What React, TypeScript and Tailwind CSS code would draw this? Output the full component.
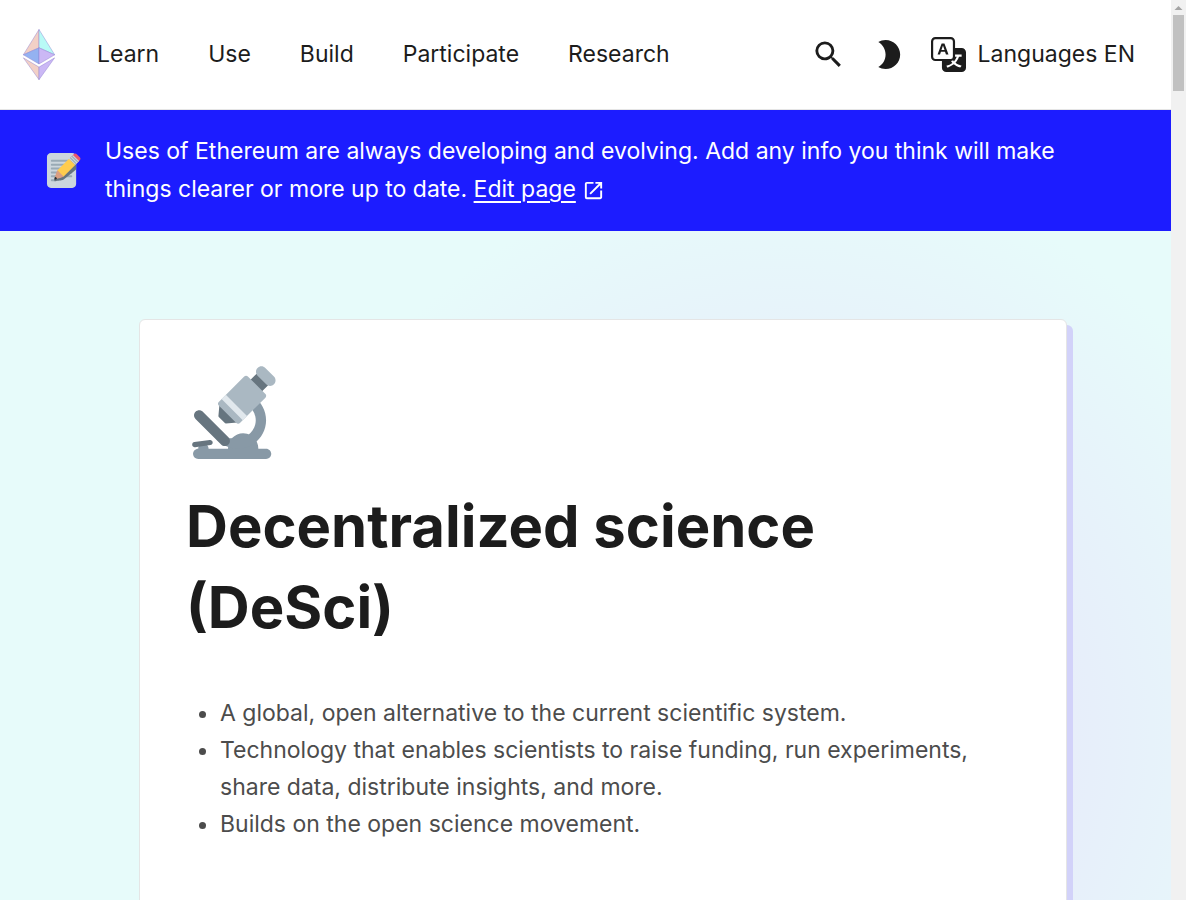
import { MdBrightness2, MdOpenInNew, MdSearch } from "react-icons/md";
import { BsTranslate } from "react-icons/bs";

function EthLogo() {
  return (
    <svg viewBox="-0.5 0.5 33 52" className="h-[52px] w-[33px]" aria-hidden="true">
      <g stroke="#8c7fd0" strokeOpacity="0.55" strokeWidth="0.8" strokeLinejoin="round">
        <path fill="#f2d0c6" d="M16.5 1 .8 26.3 16.5 19.3z" />
        <path fill="#b8faf6" d="M16.5 1v18.3l15.7 7z" />
        <path fill="#94b2f1" d="M.8 26.3 16.5 19.3v16.2z" />
        <path fill="#cbb8f5" d="M32.2 26.3 16.5 19.3v16.2z" />
        <path fill="#f2d0c6" d="M.8 29.3 16.5 38.6v12.6z" />
        <path fill="#cbb8f5" d="M32.2 29.3 16.5 38.6v12.6z" />
      </g>
    </svg>
  );
}

function Memo() {
  return (
    <svg viewBox="0 0 36 36" className="size-[35px] shrink-0" aria-hidden="true">
      <path fill="#CCD6DD" d="M31 32c0 2.209-1.791 4-4 4H5c-2.209 0-4-1.791-4-4V4c0-2.209 1.791-4 4-4h22c2.209 0 4 1.791 4 4v28z" />
      <path fill="#99AAB5" d="M27 24c0 .553-.447 1-1 1H6c-.552 0-1-.447-1-1 0-.553.448-1 1-1h20c.553 0 1 .447 1 1zm-16 4c0 .553-.448 1-1 1H6c-.552 0-1-.447-1-1 0-.553.448-1 1-1h4c.552 0 1 .447 1 1zM27 8c0 .552-.447 1-1 1H6c-.552 0-1-.448-1-1s.448-1 1-1h20c.553 0 1 .448 1 1zm0 4c0 .553-.447 1-1 1H6c-.552 0-1-.447-1-1 0-.553.448-1 1-1h20c.553 0 1 .447 1 1zm0 4c0 .553-.447 1-1 1H6c-.552 0-1-.447-1-1 0-.553.448-1 1-1h20c.553 0 1 .447 1 1zm0 4c0 .553-.447 1-1 1H6c-.552 0-1-.447-1-1 0-.553.448-1 1-1h20c.553 0 1 .447 1 1z" />
      <path fill="#66757F" d="M31 6.272c-.827-.535-1.837-.579-2.521-.023l-.792.646-1.484 1.211-.1.08-2.376 1.938-11.878 9.686c-.437.357-.793 1.219-1.173 2.074-.378.85-.969 2.852-1.443 4.391-.148.25-1.065 1.846-.551 2.453.52.615 2.326.01 2.568-.076 1.626-.174 3.731-.373 4.648-.58.924-.211 1.854-.395 2.291-.752.008-.006.01-.018.017-.023l11.858-9.666.792-.646.144-.118V6.272z" />
      <path fill="#D99E82" d="M18.145 22.526s-1.274-1.881-2.117-2.553c-.672-.843-2.549-2.116-2.549-2.116-.448-.446-1.191-.48-1.629-.043-.437.438-.793 1.366-1.173 2.291-.472 1.146-1.276 4.154-1.768 5.752-.083.272.517-.45.503-.21-.01.187.027.394.074.581l-.146.159.208.067c.025.082.05.154.068.21l.159-.146c.187.047.394.084.58.074.24-.014-.483.587-.21.503 1.598-.493 4.607-1.296 5.752-1.768.924-.381 1.854-.736 2.291-1.174.439-.435.406-1.178-.043-1.627z" />
      <path fill="#EA596E" d="M25.312 4.351c-.876.875-.876 2.293 0 3.168l3.167 3.168c.876.874 2.294.874 3.168 0l3.169-3.168c.874-.875.874-2.293 0-3.168l-3.169-3.168c-.874-.875-2.292-.875-3.168 0l-3.167 3.168z" />
      <path fill="#FFCC4D" d="M11.849 17.815l3.17 3.17 3.165 3.166 11.881-11.879-6.337-6.336-11.879 11.879z" />
      <path fill="#292F33" d="M11.298 26.742s-2.06 1.133-2.616.576c-.557-.558.581-2.611.581-2.611s1.951.036 2.035 2.035z" />
      <path fill="#CCD6DD" d="M23.728 5.935l3.96-3.96 6.336 6.337-3.96 3.961z" />
      <path fill="#99AAB5" d="M26.103 3.558l.792-.792 6.336 6.335-.792.792zM24.52 5.142l.791-.791 6.336 6.335-.792.792z" />
    </svg>
  );
}

function Microscope() {
  return (
    <svg viewBox="0 0 36 36" className="size-[93px]" role="img" aria-label="Microscope">
      <path fill="#66757F" d="M19.78 21.345l-6.341-6.342-.389 4.38 2.35 2.351z" />
      <path fill="#66757F" d="M15.4 22.233c-.132 0-.259-.053-.354-.146l-2.351-2.351c-.104-.104-.158-.25-.145-.397l.389-4.38c.017-.193.145-.359.327-.425.182-.067.388-.021.524.116l6.341 6.342c.138.138.183.342.116.524s-.232.31-.426.327l-4.379.389-.042.001z" />
      <path fill="#8899A6" d="M31 32h-3c0-3.314-2.63-6-5.875-6-3.244 0-5.875 2.686-5.875 6H8.73c0-1.104-.895-2-2-2-1.104 0-2 .896-2 2-1.104 0-2 .896-2 2s.896 2 2 2H31c1.104 0 2-.896 2-2s-.896-2-2-2z" />
      <path fill="#8899A6" d="M20 10v4c3.866 0 7 3.134 7 7s-3.134 7-7 7h-8.485c2.018 2.443 5.069 4 8.485 4 6.075 0 11-4.925 11-11s-4.925-11-11-11z" />
      <path fill="#67757F" d="M16.414 30.414c-.781.781-2.047.781-2.828 0l-9.899-9.9c-.781-.781-.781-2.047 0-2.828.781-.781 2.047-.781 2.829 0l9.899 9.9c.78.781.78 2.047-.001 2.828zm-7.225-1.786c.547-.077 1.052.304 1.129.851.077.547-.305 1.053-.851 1.129l-5.942.834c-.547.077-1.052-.305-1.129-.851-.077-.547.305-1.053.852-1.13l5.941-.833zM27.341 2.98l4.461 4.461-3.806 3.807-4.461-4.461z" />
      <path fill="#AAB8C2" d="M34.037 7.083c-.827.827-2.17.827-2.997 0l-3.339-3.34c-.827-.826-.827-2.169 0-2.996.827-.826 2.169-.826 2.995 0l3.342 3.34c.826.827.826 2.168-.001 2.996zm-14.56 15.026l-6.802-6.803c-.389-.389-.389-1.025 0-1.414l9.858-9.858c.389-.389 1.025-.389 1.414 0l6.801 6.803c.389.389.389 1.025 0 1.414l-9.858 9.858c-.388.389-1.024.389-1.413 0z" />
      <path fill="#E1E8ED" d="M13.766 12.8l1.638-1.637 8.216 8.216-1.638 1.637z" />
    </svg>
  );
}

const navItems = ["Learn", "Use", "Build", "Participate", "Research"];

const highlights = [
  "A global, open alternative to the current scientific system.",
  "Technology that enables scientists to raise funding, run experiments, share data, distribute insights, and more.",
  "Builds on the open science movement.",
];

function Header() {
  return (
    <header className="flex h-[110px] shrink-0 items-center justify-between border-b border-[#e5e5e5] bg-white pr-9 pl-[22px]">
      <div className="flex items-center gap-[42px]">
        <a href="#home" aria-label="Home">
          <EthLogo />
        </a>
        <nav className="flex gap-[49px]">
          {navItems.map((item) => (
            <button key={item} type="button">
              {item}
            </button>
          ))}
        </nav>
      </div>
      <div className="flex items-center">
        <button type="button" aria-label="Search" className="mr-[25px]">
          <MdSearch className="size-[35px]" />
        </button>
        <button type="button" aria-label="Switch theme" className="mr-[25px]">
          <MdBrightness2 className="size-[35px]" />
        </button>
        <a href="#languages" className="flex items-center gap-3">
          <BsTranslate className="size-[35px]" />
          Languages EN
        </a>
      </div>
    </header>
  );
}

function Banner() {
  return (
    <aside className="flex shrink-0 items-center gap-6 bg-[#1c1cff] px-[46px] pt-[22px] pb-[23px] leading-[38px] text-white">
      <Memo />
      <p className="max-w-[980px]">
        Uses of Ethereum are always developing and evolving. Add any info you think will make things clearer or more up
        to date.{" "}
        <a href="#edit" className="underline underline-offset-4">
          Edit page
        </a>
        <MdOpenInNew className="ml-1.5 inline size-[23px] align-[-5px]" aria-hidden="true" />
      </p>
    </aside>
  );
}

function Hero() {
  return (
    <main className="min-h-[860px] shrink-0 bg-[radial-gradient(46.28%_66.31%_at_66.95%_58.35%,#e6e6f7_0%,#e7edfa_50%,#e7fbfa_100%)] pt-[88px] pr-[104px] pl-[139px]">
      <section className="min-h-[684px] rounded-[6px] border border-[#e5e5e5] bg-white px-[46px] pt-[46px] shadow-[6px_6px_0_0_#d2d2f9]">
        <Microscope />
        <h1 className="mt-[27px] max-w-[740px] text-[58px] leading-[81px] font-bold">Decentralized science (DeSci)</h1>
        <ul className="mt-[47px] list-disc pl-[34px] leading-[37px] text-[#4c4c4c]">
          {highlights.map((text) => (
            <li key={text}>{text}</li>
          ))}
        </ul>
      </section>
    </main>
  );
}

function ScrollRail() {
  return (
    <div className="flex w-[15px] shrink-0 flex-col items-center bg-[#f1f1f1]" aria-hidden="true">
      <svg viewBox="0 0 15 15" className="size-[15px]">
        <path fill="#a3a3a3" d="M3.5 10h8l-4-4z" />
      </svg>
      <div className="h-[76px] w-[11px] bg-[#c1c1c1]" />
    </div>
  );
}

export default function App() {
  return (
    <div className="flex h-screen overflow-hidden font-['Inter',sans-serif] text-[23px] text-[#1c1c1c]">
      <div className="flex min-w-0 flex-1 flex-col overflow-hidden">
        <Header />
        <Banner />
        <Hero />
      </div>
      <ScrollRail />
    </div>
  );
}
